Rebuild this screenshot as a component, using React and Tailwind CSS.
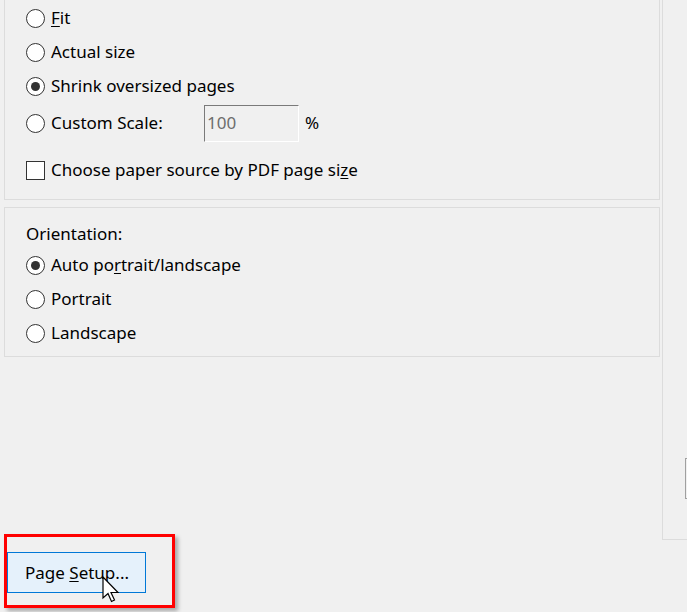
import React from "react";

const font = { fontFamily: '"Noto Sans", "Open Sans", sans-serif' };

const Radio = ({ checked }) => (
  <span className="flex h-[19px] w-[19px] shrink-0 items-center justify-center rounded-full border border-[#333333] bg-white">
    {checked && <span className="h-[9px] w-[9px] rounded-full bg-[#333333]" />}
  </span>
);

const RadioRow = ({ checked, children }) => (
  <div className="flex h-[34px] items-center gap-[6px]">
    <Radio checked={checked} />
    <span>{children}</span>
  </div>
);

const App = () => {
  return (
    <div
      className="relative flex h-[612px] w-[687px] overflow-hidden bg-[#f0f0f0] text-[17px] text-black"
      style={font}
    >
      {/* Left column */}
      <div className="flex w-[662px] shrink-0 flex-col">
        {/* Page sizing group */}
        <div className="ml-[4px] w-[656px] border border-t-0 border-[#dcdcdc] pl-[21px] pt-[1px] pb-[12px]">
          <RadioRow>
            <span className="underline underline-offset-2">F</span>it
          </RadioRow>
          <RadioRow>Actual size</RadioRow>
          <RadioRow checked>Shrink oversized pages</RadioRow>
          <div className="flex h-[40px] items-center">
            <Radio />
            <span className="ml-[6px] w-[153px]">Custom Scale:</span>
            <div className="flex h-[37px] w-[95px] items-start border border-t-[#7a7a7a] border-l-[#7a7a7a] border-b-white border-r-white bg-[#f0f0f0] pl-[2px] pt-[4px] text-[#6d6d6d]">
              100
            </div>
            <span className="ml-[6px]">%</span>
          </div>
          <div className="mt-[10px] flex h-[34px] items-center gap-[6px]">
            <span className="h-[19px] w-[19px] shrink-0 border border-[#333333] bg-white" />
            <span>
              Choose paper source by PDF page si
              <span className="underline underline-offset-2">z</span>e
            </span>
          </div>
        </div>

        {/* Orientation group */}
        <div className="ml-[4px] mt-[7px] w-[656px] border border-[#dcdcdc] pl-[21px] pt-[15px] pb-[6px]">
          <div className="flex h-[22px] items-center">Orientation:</div>
          <div className="mt-[3px]">
            <RadioRow checked>
              Auto po<span className="underline underline-offset-2">r</span>trait/landscape
            </RadioRow>
            <RadioRow>Portrait</RadioRow>
            <RadioRow>Landscape</RadioRow>
          </div>
        </div>

        {/* Page setup button */}
        <div className="ml-[7px] mt-[195px]">
          <button className="flex h-[41px] w-[139px] items-center border border-[#0078d7] bg-[#e5f1fb] pl-[17px] text-black">
            <span>
              Page <span className="underline underline-offset-2">S</span>etup...
            </span>
          </button>
        </div>
      </div>

      {/* Right panel */}
      <div className="relative h-[540px] flex-1 border-l border-b border-[#dcdcdc]">
        <div className="absolute right-0 top-[458px] h-[41px] w-[2px] border border-r-0 border-[#a0a0a0]" />
      </div>

      {/* Red highlight annotation */}
      <div className="pointer-events-none absolute left-[4px] top-[534px] h-[74px] w-[171px] border-[3px] border-[#ff0000] shadow-[3px_3px_4px_rgba(0,0,0,0.3)]" />

      {/* Mouse cursor */}
      <svg
        className="absolute left-[102px] top-[576px]"
        width="20"
        height="28"
        viewBox="0 0 20 28"
      >
        <path
          d="M1 1 L1 22 L6 17.5 L9.5 25.5 L12.5 24 L9 16.5 L16 16.5 Z"
          fill="white"
          stroke="black"
          strokeWidth="1.2"
          strokeLinejoin="miter"
        />
      </svg>
    </div>
  );
};

export default App;
